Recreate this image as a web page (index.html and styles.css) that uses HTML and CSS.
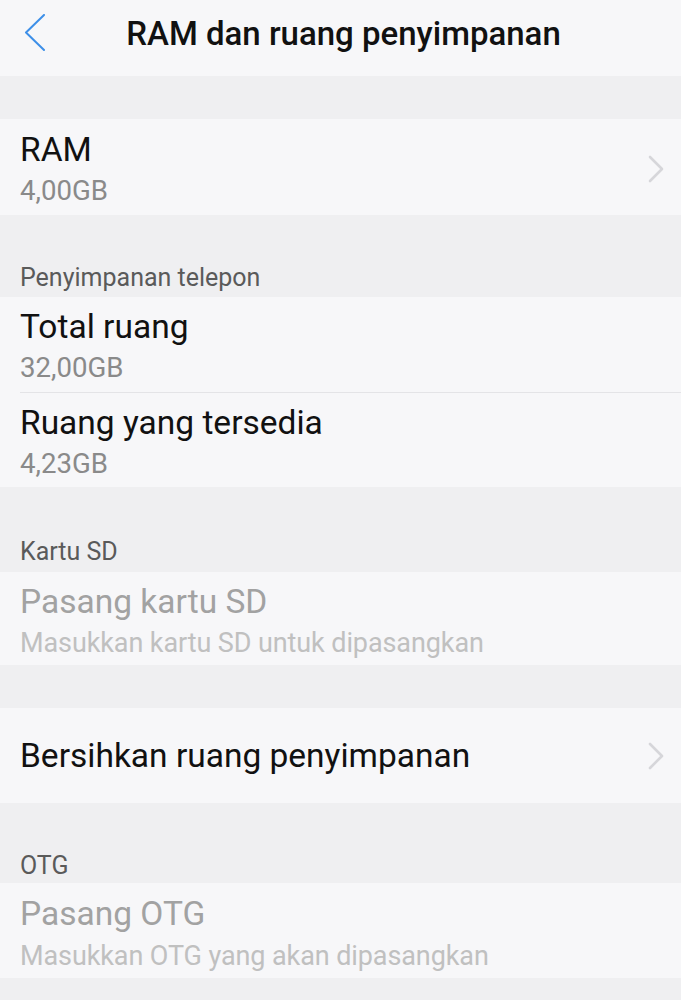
FILE: index.html
```html
<!DOCTYPE html>
<html lang="id">
<head>
<meta charset="utf-8">
<title>RAM dan ruang penyimpanan</title>
<link rel="stylesheet" href="styles.css">
</head>
<body>
<div class="screen">
  <header class="topbar">
    <button class="back" aria-label="Kembali">
      <svg width="24" height="38" viewBox="0 0 24 38"><polyline points="22,1 4,18.5 22,36" fill="none" stroke="#3d8fe8" stroke-width="2" stroke-linecap="round" stroke-linejoin="round"/></svg>
    </button>
    <h1 class="title">RAM dan ruang penyimpanan</h1>
  </header>

  <div class="gap"></div>

  <div class="item item-ram">
    <div class="texts">
      <div class="name">RAM</div>
      <div class="value">4,00GB</div>
    </div>
    <svg class="chev" width="18" height="28" viewBox="0 0 18 28"><polyline points="3,2 15,14 3,26" fill="none" stroke="#d6d6da" stroke-width="2.6" stroke-linecap="round" stroke-linejoin="round"/></svg>
  </div>

  <div class="section sec-phone">Penyimpanan telepon</div>
  <div class="item">
    <div class="texts">
      <div class="name">Total ruang</div>
      <div class="value">32,00GB</div>
    </div>
  </div>
  <div class="divider"></div>
  <div class="item item-tight">
    <div class="texts">
      <div class="name">Ruang yang tersedia</div>
      <div class="value">4,23GB</div>
    </div>
  </div>

  <div class="section sec-sd">Kartu SD</div>
  <div class="item item-sd disabled">
    <div class="texts">
      <div class="name">Pasang kartu SD</div>
      <div class="value">Masukkan kartu SD untuk dipasangkan</div>
    </div>
  </div>

  <div class="gap"></div>

  <div class="item single">
    <div class="texts">
      <div class="name">Bersihkan ruang penyimpanan</div>
    </div>
    <svg class="chev" width="18" height="28" viewBox="0 0 18 28"><polyline points="3,2 15,14 3,26" fill="none" stroke="#d6d6da" stroke-width="2.6" stroke-linecap="round" stroke-linejoin="round"/></svg>
  </div>

  <div class="section sec-otg">OTG</div>
  <div class="item item-otg disabled">
    <div class="texts">
      <div class="name">Pasang OTG</div>
      <div class="value">Masukkan OTG yang akan dipasangkan</div>
    </div>
  </div>
</div>
</body>
</html>
```

FILE: styles.css
```css
html, body {
  margin: 0;
  padding: 0;
  background: #efeff1;
}
body {
  font-family: Roboto, "Noto Sans", "Liberation Sans", sans-serif;
  color: #111;
}
.screen {
  width: 681px;
  min-height: 1000px;
  background: #efeff1;
}
.topbar {
  height: 76px;
  box-sizing: border-box;
  padding-bottom: 9px;
  background: #f7f7f9;
  display: flex;
  align-items: center;
  justify-content: center;
  position: relative;
}
.back {
  position: absolute;
  left: 22px;
  top: 14px;
  border: 0;
  padding: 0;
  background: none;
  display: flex;
}
.title {
  margin: 0;
  padding-left: 6px;
  font-size: 33px;
  font-weight: 500;
  color: #111;
}
.gap {
  height: 43px;
}
.item {
  background: #f7f7f9;
  display: flex;
  align-items: center;
  padding: 10px 16px 7px 20px;
}
.item-ram {
  padding-top: 11px;
  padding-bottom: 7px;
}
.item-tight {
  padding-top: 10px;
  padding-bottom: 6px;
}
.item-sd {
  padding-top: 10px;
  padding-bottom: 5px;
}
.item-otg {
  padding-top: 11px;
  padding-bottom: 5px;
}
.item-otg .texts {
  gap: 5px;
}
.texts {
  flex: 1;
  display: flex;
  flex-direction: column;
  gap: 4px;
}
.name {
  font-size: 33.5px;
  line-height: 40px;
  color: #111;
}
.value {
  font-size: 27.6px;
  line-height: 34px;
  color: #8a8a8a;
}
.disabled .value {
  font-size: 27px;
  letter-spacing: -0.1px;
}
.chev {
  flex: none;
}
.item.single {
  height: 95px;
  padding: 0 16px 0 20px;
  box-sizing: border-box;
}
.disabled .name {
  color: #a2a2a2;
}
.disabled .value {
  color: #c0c0c0;
}
.divider {
  height: 1px;
  border-left: 20px solid #f7f7f9;
  background: #e4e4e7;
}
.section {
  box-sizing: border-box;
  display: flex;
  align-items: flex-end;
  padding: 0 20px 4px;
  font-size: 25px;
  line-height: 30px;
  color: #5a5a5a;
}
.sec-phone {
  height: 82px;
}
.sec-sd {
  height: 85px;
  padding-bottom: 5px;
}
.sec-otg {
  height: 80px;
  padding-bottom: 2px;
}
```
